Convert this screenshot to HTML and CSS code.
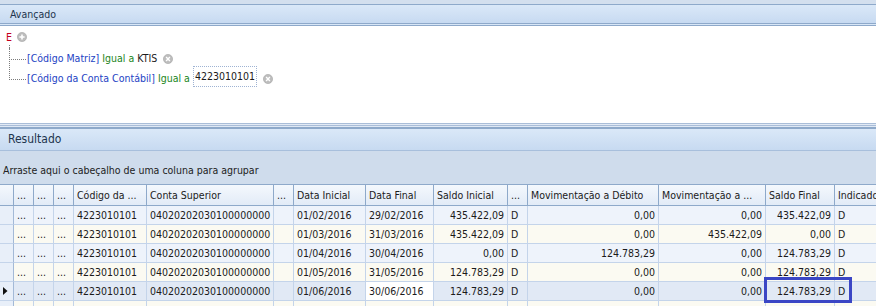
FILE: index.html
```html
<!DOCTYPE html>
<html lang="pt">
<head>
    <meta charset="UTF-8">
    <meta name="viewport" content="width=device-width, initial-scale=1.0">
    <title>Consulta de Saldos</title>
    <link rel="stylesheet" href="styles.css">
</head>
<body>
    <div class="top-strip"></div>

    <div class="panel-head">Avançado</div>
    <div class="filter">
        <div class="root">
            <span class="group-op">E</span>
            <svg class="icon" width="10" height="10" viewBox="0 0 10 10"><circle cx="5" cy="5" r="4.6" fill="#bdbdbd" stroke="#a6a6a6" stroke-width="0.6"/><path d="M5 2.4v5.2M2.4 5h5.2" stroke="#fff" stroke-width="1.6"/></svg>
        </div>
        <div class="tree">
            <div class="node">
                <span class="field">[Código Matriz]</span>
                <span class="op">Igual a</span>
                <span class="val">KTIS</span>
                <svg class="icon" width="10" height="10" viewBox="0 0 10 10"><circle cx="5" cy="5" r="4.6" fill="#bdbdbd" stroke="#a6a6a6" stroke-width="0.6"/><path d="M3.1 3.1l3.8 3.8M6.9 3.1l-3.8 3.8" stroke="#fff" stroke-width="1.4"/></svg>
            </div>
            <div class="node">
                <span class="field">[Código da Conta Contábil]</span>
                <span class="op">Igual a</span>
                <span class="val editing">4223010101</span>
                <svg class="icon" width="10" height="10" viewBox="0 0 10 10"><circle cx="5" cy="5" r="4.6" fill="#bdbdbd" stroke="#a6a6a6" stroke-width="0.6"/><path d="M3.1 3.1l3.8 3.8M6.9 3.1l-3.8 3.8" stroke="#fff" stroke-width="1.4"/></svg>
            </div>
        </div>
    </div>

    <div class="splitter"></div>

    <div class="panel-head result-head">Resultado</div>
    <div class="group-panel">Arraste aqui o cabeçalho de uma coluna para agrupar</div>

    <div class="grid">
        <div class="row head">
            <div class="cell ind"></div>
            <div class="cell">...</div>
            <div class="cell">...</div>
            <div class="cell">...</div>
            <div class="cell">Código da ...</div>
            <div class="cell">Conta Superior</div>
            <div class="cell">...</div>
            <div class="cell">Data Inicial</div>
            <div class="cell">Data Final</div>
            <div class="cell">Saldo Inicial</div>
            <div class="cell">...</div>
            <div class="cell">Movimentação a Débito</div>
            <div class="cell">Movimentação a ...</div>
            <div class="cell">Saldo Final</div>
            <div class="cell">Indicado</div>
        </div>

        <div class="row">
            <div class="cell ind"></div>
            <div class="cell">...</div><div class="cell">...</div><div class="cell">...</div>
            <div class="cell">4223010101</div>
            <div class="cell">04020202030100000000</div>
            <div class="cell"></div>
            <div class="cell">01/02/2016</div>
            <div class="cell">29/02/2016</div>
            <div class="cell num">435.422,09</div>
            <div class="cell">D</div>
            <div class="cell num">0,00</div>
            <div class="cell num">0,00</div>
            <div class="cell num">435.422,09</div>
            <div class="cell">D</div>
        </div>

        <div class="row alt">
            <div class="cell ind"></div>
            <div class="cell">...</div><div class="cell">...</div><div class="cell">...</div>
            <div class="cell">4223010101</div>
            <div class="cell">04020202030100000000</div>
            <div class="cell"></div>
            <div class="cell">01/03/2016</div>
            <div class="cell">31/03/2016</div>
            <div class="cell num">435.422,09</div>
            <div class="cell">D</div>
            <div class="cell num">0,00</div>
            <div class="cell num">435.422,09</div>
            <div class="cell num">0,00</div>
            <div class="cell">D</div>
        </div>

        <div class="row">
            <div class="cell ind"></div>
            <div class="cell">...</div><div class="cell">...</div><div class="cell">...</div>
            <div class="cell">4223010101</div>
            <div class="cell">04020202030100000000</div>
            <div class="cell"></div>
            <div class="cell">01/04/2016</div>
            <div class="cell">30/04/2016</div>
            <div class="cell num">0,00</div>
            <div class="cell">D</div>
            <div class="cell num">124.783,29</div>
            <div class="cell num">0,00</div>
            <div class="cell num">124.783,29</div>
            <div class="cell">D</div>
        </div>

        <div class="row alt">
            <div class="cell ind"></div>
            <div class="cell">...</div><div class="cell">...</div><div class="cell">...</div>
            <div class="cell">4223010101</div>
            <div class="cell">04020202030100000000</div>
            <div class="cell"></div>
            <div class="cell">01/05/2016</div>
            <div class="cell">31/05/2016</div>
            <div class="cell num">124.783,29</div>
            <div class="cell">D</div>
            <div class="cell num">0,00</div>
            <div class="cell num">0,00</div>
            <div class="cell num">124.783,29</div>
            <div class="cell">D</div>
        </div>

        <div class="row current">
            <div class="cell ind">
                <svg width="5" height="8" viewBox="0 0 5 8"><path d="M0 0l4.5 4L0 8z" fill="#111"/></svg>
            </div>
            <div class="cell">...</div><div class="cell">...</div><div class="cell">...</div>
            <div class="cell">4223010101</div>
            <div class="cell">04020202030100000000</div>
            <div class="cell"></div>
            <div class="cell">01/06/2016</div>
            <div class="cell focus">30/06/2016</div>
            <div class="cell num">124.783,29</div>
            <div class="cell">D</div>
            <div class="cell num">0,00</div>
            <div class="cell num">0,00</div>
            <div class="cell num">124.783,29</div>
            <div class="cell">D</div>
        </div>

        <div class="row alt">
            <div class="cell ind"></div>
            <div class="cell">...</div><div class="cell">...</div><div class="cell">...</div>
            <div class="cell">4223010101</div>
            <div class="cell">04020202030100000000</div>
            <div class="cell"></div>
            <div class="cell">01/07/2016</div>
            <div class="cell">31/07/2016</div>
            <div class="cell num">124.783,29</div>
            <div class="cell">D</div>
            <div class="cell num">0,00</div>
            <div class="cell num">0,00</div>
            <div class="cell num">124.783,29</div>
            <div class="cell">D</div>
        </div>

        <!-- highlight drawn over the cell -->
        <div class="mark"></div>
    </div>
</body>
</html>
```

FILE: styles.css
```css
*{
    box-sizing: border-box;
}
body{
    margin: 0;
    width: 876px;
    height: 306px;
    overflow: hidden;
    background: #fff;
    font-family: "DejaVu Sans Condensed", "DejaVu Sans", sans-serif;
    font-stretch: semi-condensed;
    font-size: 10.5px;
    color: #1b1b1b;
}
.top-strip{
    height: 4px;
    background: #d3dfee;
}
.panel-head{
    height: 22px;
    border-top: 1px solid #8ea9ca;
    border-bottom: 3px double #8ea9ca;
    background: linear-gradient(#dae8f8, #c7daf1);
    padding-left: 10px;
    line-height: 18px;
    color: #22344d;
}
.filter{
    height: 97px;
    padding: 2px 0 0 6px;
    background: #fff;
}
.root{
    height: 18px;
    line-height: 18px;
    display: flex;
    align-items: center;
    gap: 5px;
}
.group-op{
    color: #c4001c;
}
.icon{
    display: inline-block;
    vertical-align: middle;
}
.tree{
    margin: 2px 0 0 3px;
}
.node{
    position: relative;
    height: 20px;
    line-height: 20px;
    padding-left: 18px;
    white-space: nowrap;
}
.node::before{
    content: "";
    position: absolute;
    left: 0;
    top: -3px;
    width: 16px;
    height: 14px;
    border-left: 1px dotted #7b7b7b;
    border-bottom: 1px dotted #7b7b7b;
}
.node:not(:last-child)::after{
    content: "";
    position: absolute;
    left: 0;
    top: 0;
    bottom: 0;
    border-left: 1px dotted #7b7b7b;
}
.field{
    color: #2443c4;
}
.op{
    color: #1b861b;
}
.val{
    color: #1b1b1b;
}
.editing{
    display: inline-block;
    height: 21px;
    line-height: 19px;
    padding: 0 1px;
    border: 1px dotted #9fb3d3;
    vertical-align: top;
    margin-top: -2px;
}
.node .icon{
    margin-left: 3px;
}
.splitter{
    height: 6px;
    background: linear-gradient(#a9bdd8 0 1px, #e2eaf5 1px 2px, #a9bdd8 2px 3px, #dfe8f4 3px 4px, #8ea9ca 4px 6px);
}
.result-head{
    border-top: none;
    height: 22px;
    line-height: 21px;
    border-bottom: 1px solid #a8bfdc;
    padding-left: 8px;
    font-size: 12px;
}
.group-panel{
    height: 33px;
    padding: 10px 0 0 3px;
    line-height: 18px;
    background: #cfdcec;
    color: #222;
}
.grid{
    position: relative;
    border-top: 1px solid #8ea9ca;
}
.row{
    display: grid;
    grid-template-columns: 14px 20px 20px 20px 73px 127px 20px 72px 68px 74px 20px 131px 107px 69px 41px;
    height: 19px;
    background: #eef3fb;
}
.row.alt{
    background: #fbfaf2;
}
.row.current{
    background: #e1e9f5;
}
.cell{
    border-right: 1px solid #c4d4ea;
    border-bottom: 1px solid #c4d4ea;
    padding: 0 3px;
    line-height: 18px;
    white-space: nowrap;
    overflow: hidden;
}
.num{
    text-align: right;
}
.cell.focus{
    background: #fff;
}
.cell.ind{
    background: #e8eff9;
    border-right-color: #a3b9d7;
    display: flex;
    align-items: center;
    padding-left: 3px;
}
.row.head{
    height: 21px;
}
.row.head .cell{
    background: linear-gradient(#f4f8fd, #e2ebf7);
    border-color: #8ea9ca;
    line-height: 20px;
}
.row.head .cell:last-child, .row .cell:last-child{
    border-right: none;
    padding-right: 0;
}
.mark{
    position: absolute;
    left: 764px;
    top: 92px;
    width: 88px;
    height: 26px;
    border: 3px solid #3b46c5;
}
```
